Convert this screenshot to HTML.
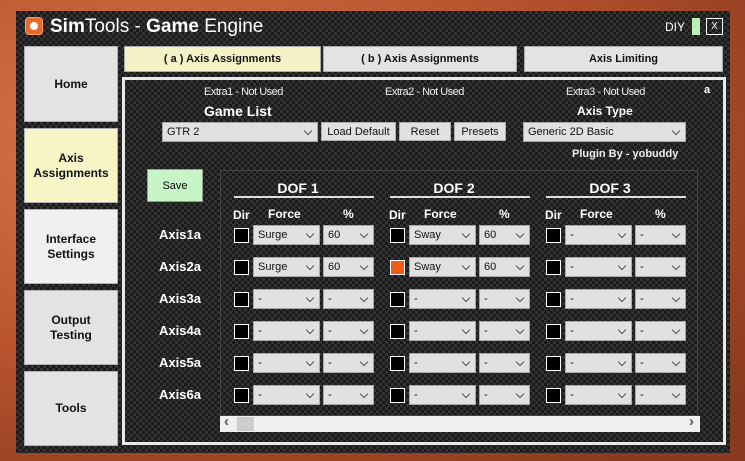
<!DOCTYPE html><html><head><style>
*{margin:0;padding:0;box-sizing:border-box}
body{width:745px;height:461px;overflow:hidden;position:relative;font-family:"Liberation Sans",sans-serif;
background:radial-gradient(ellipse at 20% 30%,#d9764a,#b8532e 50%,#8a3a1e 90%);}
.cf{background-color:#1a1a1a;background-image:linear-gradient(45deg,#333 25%,transparent 25%,transparent 75%,#333 75%),linear-gradient(45deg,#333 25%,transparent 25%,transparent 75%,#333 75%);background-size:6px 6px;background-position:0 0,3px 3px}
.a{position:absolute}
.nav{position:absolute;left:24px;width:94px;background:#e3e3e3;border:1px solid #b0b0b0;font-weight:bold;font-size:12px;color:#111;display:flex;align-items:center;justify-content:center;text-align:center;line-height:15px}
.tab{position:absolute;top:46px;height:26px;background:#e3e3e3;border:1px solid #aaa;font-weight:bold;font-size:11px;display:flex;align-items:center;justify-content:center;color:#111}
.w{color:#fff;font-weight:bold;position:absolute}
.s{color:#eee;font-size:11px;position:absolute;letter-spacing:-0.5px}
.btn{position:absolute;top:122px;height:19px;background:#e1e1e1;border:1px solid #adadad;font-size:11px;display:flex;align-items:center;justify-content:center;color:#111}
.cb{position:absolute;height:20px;background:#e1e1e1;border:1px solid #a8a8a8;font-size:11px;color:#111;padding-left:4px;line-height:18px}
.cb:after{content:"";position:absolute;right:6px;top:5px;width:5px;height:5px;border-right:1px solid #555;border-bottom:1px solid #555;transform:rotate(45deg)}
.dir{position:absolute;width:15px;height:15px;background:#000;border:1px solid #fff}
</style></head><body>
<div class="a cf" style="left:16px;top:11px;width:714px;height:442px"></div>
<div class="a" style="left:25px;top:17px;width:18px;height:18px;border-radius:4px;background:#e8692a;border:1px solid #f5a070"></div>
<div class="a" style="left:30px;top:22px;width:8px;height:8px;border-radius:50%;background:#fff"></div>
<div class="a" style="left:50px;top:16px;color:#fff;font-size:19px"><b>Sim</b>Tools - <b>Game</b> Engine</div>
<div class="a" style="left:665px;top:20px;color:#fff;font-size:12px">DIY</div>
<div class="a" style="left:692px;top:18px;width:8px;height:17px;background:#b8f0b8"></div>
<div class="a" style="left:706px;top:18px;width:17px;height:17px;border:1px solid #fff;color:#fff;font-size:10px;text-align:center;line-height:15px">X</div>
<div class="nav" style="top:46px;height:76px">Home</div>
<div class="nav" style="top:128px;height:75px;background:#f7f5c8">Axis<br>Assignments</div>
<div class="nav" style="top:209px;height:75px;background:#f0f0f0">Interface<br>Settings</div>
<div class="nav" style="top:290px;height:75px">Output<br>Testing</div>
<div class="nav" style="top:371px;height:75px">Tools</div>
<div class="tab" style="left:124px;width:197px;background:#f5f2c8">( a ) Axis Assignments</div>
<div class="tab" style="left:323px;width:194px">( b ) Axis Assignments</div>
<div class="tab" style="left:524px;width:199px">Axis Limiting</div>
<div class="a" style="left:122px;top:77px;width:604px;height:368px;border:3px solid #e8e8e8"></div>
<div class="s" style="left:204px;top:86px">Extra1 - Not Used</div>
<div class="s" style="left:385px;top:86px">Extra2 - Not Used</div>
<div class="s" style="left:566px;top:86px">Extra3 - Not Used</div>
<div class="w" style="left:704px;top:84px;font-size:11px">a</div>
<div class="w" style="left:204px;top:103px;font-size:14px">Game List</div>
<div class="w" style="left:577px;top:104px;font-size:12px">Axis Type</div>
<div class="cb" style="left:162px;top:122px;width:156px">GTR 2</div>
<div class="btn" style="left:321px;width:75px">Load Default</div>
<div class="btn" style="left:399px;width:52px">Reset</div>
<div class="btn" style="left:454px;width:52px">Presets</div>
<div class="cb" style="left:523px;top:122px;width:163px">Generic 2D Basic</div>
<div class="w" style="left:572px;top:148px;font-size:11px;color:#eee">Plugin By - yobuddy</div>
<div class="a" style="left:147px;top:169px;width:56px;height:33px;background:#c8f5c8;border:1px solid #999;font-size:11px;display:flex;align-items:center;justify-content:center">Save</div>
<div class="a" style="left:220px;top:170px;width:478px;height:246px;border:1px solid #444"></div>
<div id="g"></div>
<div class="a" style="left:220px;top:416px;width:480px;height:16px;background:#f0f0f0"></div>
<div class="a" style="left:237px;top:417px;width:17px;height:14px;background:#cdcdcd"></div>
<div class="a" style="left:224px;top:413px;font-size:15px;font-weight:bold;color:#555">&lsaquo;</div>
<div class="a" style="left:689px;top:413px;font-size:15px;font-weight:bold;color:#555">&rsaquo;</div>
<div class="w" style="left:256px;top:180px;font-size:14px;width:84px;text-align:center">DOF 1</div>
<div class="w" style="left:412px;top:180px;font-size:14px;width:84px;text-align:center">DOF 2</div>
<div class="w" style="left:568px;top:180px;font-size:14px;width:84px;text-align:center">DOF 3</div>
<div class="a" style="left:234px;top:196px;width:140px;height:2px;background:#ddd"></div>
<div class="a" style="left:390px;top:196px;width:140px;height:2px;background:#ddd"></div>
<div class="a" style="left:546px;top:196px;width:140px;height:2px;background:#ddd"></div>
<div class="w" style="left:233px;top:208px;font-size:12px">Dir</div><div class="w" style="left:268px;top:207px;font-size:12px">Force</div><div class="w" style="left:343px;top:207px;font-size:12px">%</div>
<div class="w" style="left:389px;top:208px;font-size:12px">Dir</div><div class="w" style="left:424px;top:207px;font-size:12px">Force</div><div class="w" style="left:499px;top:207px;font-size:12px">%</div>
<div class="w" style="left:545px;top:208px;font-size:12px">Dir</div><div class="w" style="left:580px;top:207px;font-size:12px">Force</div><div class="w" style="left:655px;top:207px;font-size:12px">%</div>
<script>
var h='',f=[["Surge","60","Sway","60"],["Surge","60","Sway","60"]];
for(var r=0;r<6;r++){var y=225+r*32;
h+='<div class="w" style="left:159px;top:'+(y+2)+'px;font-size:13px">Axis'+(r+1)+'a</div>';
for(var d=0;d<3;d++){var x=234+d*156;var v=(r<2&&d<2)?[f[r][d*2],f[r][d*2+1]]:['-','-'];
h+='<div class="dir" style="left:'+x+'px;top:'+(y+3)+'px;'+(r==1&&d==1?'background:#f05a14;':'')+'"></div>';
h+='<div class="cb" style="left:'+(x+19)+'px;top:'+y+'px;width:67px">'+v[0]+'</div>';
h+='<div class="cb" style="left:'+(x+89)+'px;top:'+y+'px;width:51px">'+v[1]+'</div>';}}
document.getElementById('g').innerHTML=h;
</script>
</body></html>
